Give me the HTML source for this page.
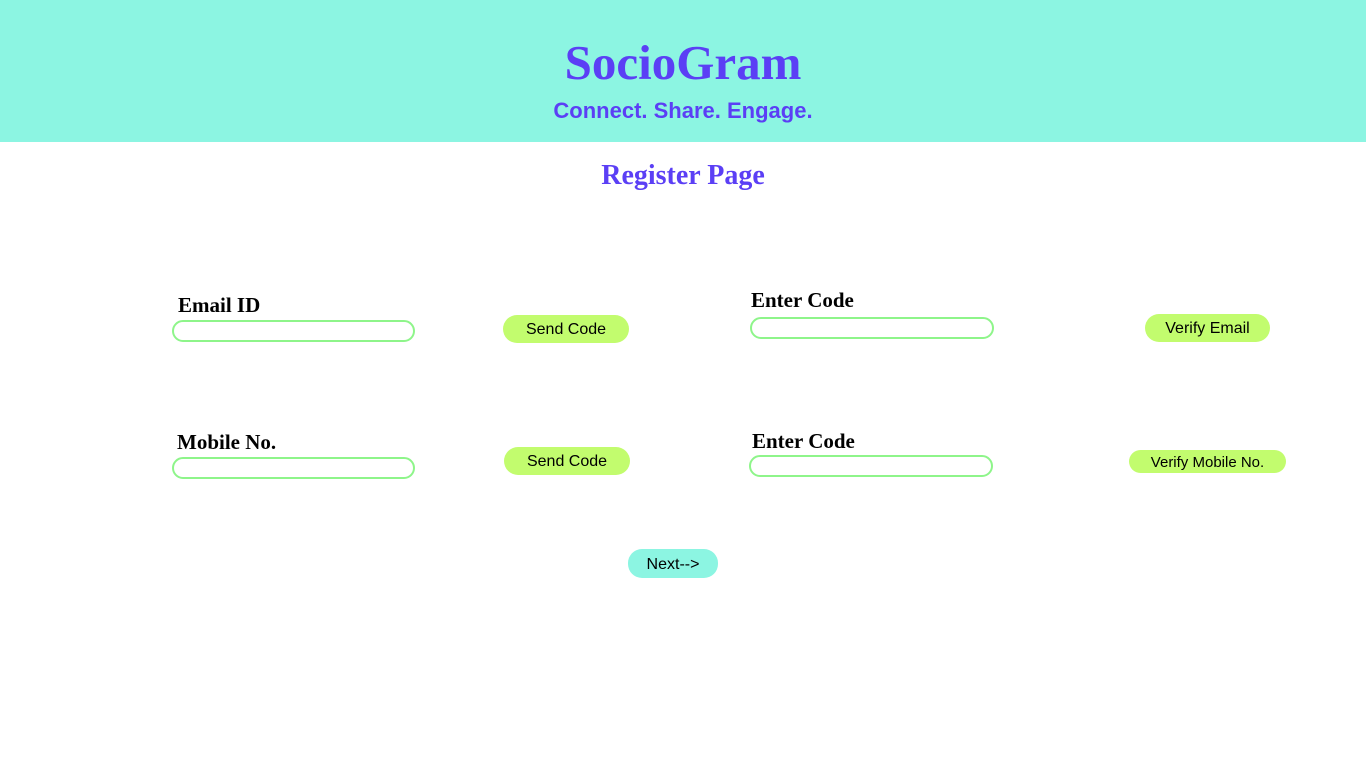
<!DOCTYPE html>
<html><head><meta charset="utf-8"><style>
body{margin:0;width:1366px;height:768px;background:#fff;position:relative;overflow:hidden;font-family:"Liberation Sans",sans-serif}
.hdr{position:absolute;left:0;top:0;width:1366px;height:142px;background:#8cf5e2}
.a{position:absolute;white-space:nowrap}
.t{left:0;width:1366px;text-align:center;color:#5b3ff5}
.lbl{font-family:"Liberation Serif",serif;font-weight:bold;font-size:21px;color:#000;line-height:24px}
.in{position:absolute;border:2px solid #8ef58a;border-radius:11px;box-sizing:border-box;background:#fff}
.btn{position:absolute;background:#c2fc6e;border-radius:14px;font-size:16px;color:#000;display:flex;align-items:center;justify-content:center;padding-top:2px;box-sizing:border-box}
</style></head><body>
<div class="hdr"></div>
<div class="a t" style="top:34px;font-family:'Liberation Serif',serif;font-weight:bold;font-size:49px;line-height:58px">SocioGram</div>
<div class="a t" style="top:97px;font-weight:bold;font-size:22px;line-height:28px">Connect. Share. Engage.</div>
<div class="a t" style="top:159px;font-family:'Liberation Serif',serif;font-weight:bold;font-size:28px;line-height:34px">Register Page</div>

<div class="a lbl" style="left:178px;top:293px">Email ID</div>
<div class="in" style="left:172px;top:320px;width:243px;height:22px"></div>
<div class="btn" style="left:503px;top:315px;width:126px;height:28px">Send Code</div>
<div class="a lbl" style="left:751px;top:288px">Enter Code</div>
<div class="in" style="left:750px;top:317px;width:244px;height:22px"></div>
<div class="btn" style="left:1145px;top:314px;width:125px;height:28px">Verify Email</div>

<div class="a lbl" style="left:177px;top:430px">Mobile No.</div>
<div class="in" style="left:172px;top:457px;width:243px;height:22px"></div>
<div class="btn" style="left:504px;top:447px;width:126px;height:28px">Send Code</div>
<div class="a lbl" style="left:752px;top:429px">Enter Code</div>
<div class="in" style="left:749px;top:455px;width:244px;height:22px"></div>
<div class="btn" style="left:1129px;top:450px;width:157px;height:23px;font-size:15px;border-radius:12px">Verify Mobile No.</div>

<div class="btn" style="left:628px;top:549px;width:90px;height:29px;background:#8cf5e2;font-size:16px">Next--&gt;</div>
</body></html>
